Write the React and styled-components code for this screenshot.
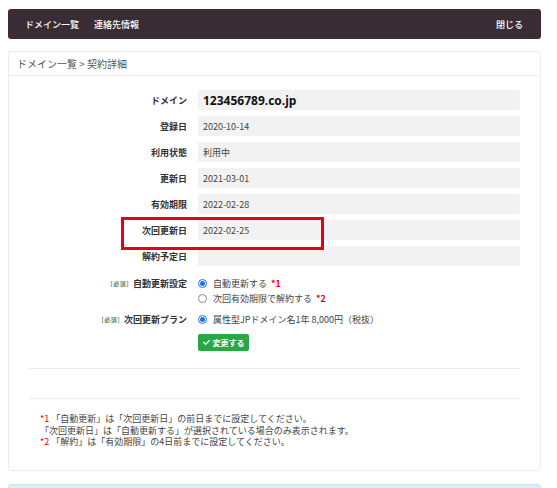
import React from 'react'
import styled, { createGlobalStyle } from 'styled-components'
import { FaCheck } from 'react-icons/fa'

const GlobalStyle = createGlobalStyle`
  html, body { margin: 0; padding: 0; background: #fff; }
  body {
    font-family: "Noto Sans CJK JP", "Noto Sans", sans-serif;
    color: #333;
  }
`

const Page = styled.div`
  padding: 9px 16px 0 8px;
`

const NavBar = styled.nav`
  height: 30px;
  background: #3a2c35;
  border-radius: 3px;
  display: flex;
  align-items: center;
  padding: 0 18px 0 17px;
  margin-bottom: 12px;
`

const NavLink = styled.a`
  color: #fff;
  font-size: 9px;
  font-weight: 500;
  text-decoration: none;
  margin-right: ${({ $last }) => ($last ? '0' : '15px')};
  margin-left: ${({ $right }) => ($right ? 'auto' : '0')};
`

const Card = styled.section`
  border: 1px solid #ececec;
  border-radius: 3px;
`

const CardHeader = styled.div`
  height: 23px;
  display: flex;
  align-items: center;
  padding: 0 8px;
  font-size: 10px;
  color: #555;
  border-bottom: 1px solid #ececec;
`

const CardBody = styled.div`
  padding: 14px 20px 22px 20px;
`

const Form = styled.div`
  display: grid;
  grid-template-columns: 158px 1fr;
  column-gap: 11px;
  row-gap: 6px;
  align-items: center;
`

const Label = styled.div`
  position: relative;
  text-align: right;
  font-size: 9px;
  font-weight: 700;
  color: #333;
  align-self: ${({ $top }) => ($top ? 'start' : 'center')};
  margin-top: ${({ $space }) => $space || '0'};
  line-height: 15px;
`

const Required = styled.span`
  font-size: 6px;
  font-weight: 700;
  letter-spacing: 0.5px;
  color: #5d8a5d;
  margin-right: 4px;
  vertical-align: 1px;
`

const Value = styled.div`
  height: 20px;
  background: #f2f2f2;
  border-radius: 2px;
  display: flex;
  align-items: center;
  padding: 0 5px;
  font-size: ${({ $big }) => ($big ? '12px' : '9px')};
  font-weight: ${({ $big }) => ($big ? 700 : 400)};
  color: ${({ $big }) => ($big ? '#111' : '#444')};
  font-family: ${({ $big }) => ($big ? '"Open Sans", "Noto Sans CJK JP", sans-serif' : 'inherit')};
`

const Highlight = styled.div`
  position: absolute;
  left: 92px;
  top: -6px;
  width: 197px;
  height: 27px;
  border: 3px solid #e60012;
  pointer-events: none;
`

const Choices = styled.div`
  display: flex;
  flex-direction: column;
  margin-top: ${({ $space }) => $space || '0'};
`

const Choice = styled.label`
  display: flex;
  align-items: center;
  height: 15px;
  font-size: 9px;
  color: #444;
`

const Radio = styled.span`
  width: 7px;
  height: 7px;
  border-radius: 50%;
  border: 1px solid ${({ $on }) => ($on ? '#1a73e8' : '#8a8a8a')};
  background: #fff;
  margin-right: 6px;
  display: inline-flex;
  align-items: center;
  justify-content: center;
  &::after {
    content: '';
    width: 5px;
    height: 5px;
    border-radius: 50%;
    background: ${({ $on }) => ($on ? '#1a73e8' : 'transparent')};
  }
`

const Mark = styled.span`
  color: #e60012;
  font-weight: 700;
  margin-left: 4px;
`

const Button = styled.button`
  margin-top: 3px;
  width: 51px;
  height: 17px;
  border: none;
  border-radius: 2px;
  background: #28a745;
  color: #fff;
  font-family: inherit;
  font-size: 8px;
  font-weight: 700;
  display: inline-flex;
  align-items: center;
  justify-content: center;
  gap: 3px;
  padding: 0;
  svg { width: 7px; height: 7px; }
`

const Rule = styled.hr`
  border: none;
  border-top: 1px solid #ececec;
  margin: ${({ $m }) => $m};
`

const Notes = styled.div`
  margin-top: 14px;
  padding-left: 11px;
  font-size: 9px;
  line-height: 11.5px;
  color: #444;
`

const Red = styled.span`
  color: #e60012;
`

const Alert = styled.div`
  margin-top: 13px;
  height: 20px;
  background: #d9eef6;
  border: 1px solid #c4e5ef;
  border-radius: 3px;
`

const rows = [
  ['ドメイン', '123456789.co.jp', true],
  ['登録日', '2020-10-14'],
  ['利用状態', '利用中'],
  ['更新日', '2021-03-01'],
  ['有効期限', '2022-02-28'],
  ['次回更新日', '2022-02-25', false, true],
  ['解約予定日', ''],
]

export default function App() {
  return (
    <Page>
      <GlobalStyle />
      <NavBar>
        <NavLink href="#">ドメイン一覧</NavLink>
        <NavLink href="#" $last>連絡先情報</NavLink>
        <NavLink href="#" $right $last>閉じる</NavLink>
      </NavBar>

      <Card>
        <CardHeader>ドメイン一覧 &gt; 契約詳細</CardHeader>
        <CardBody>
          <Form>
            {rows.map(([label, value, big, mark]) => (
              <React.Fragment key={label}>
                <Label>
                  {label}
                  {mark && <Highlight />}
                </Label>
                <Value $big={big}>{value}</Value>
              </React.Fragment>
            ))}

            <Label $top $space="4px">
              <Required>[必須]</Required>自動更新設定
            </Label>
            <Choices $space="4px">
              <Choice><Radio $on />自動更新する<Mark>*1</Mark></Choice>
              <Choice><Radio />次回有効期限で解約する<Mark>*2</Mark></Choice>
            </Choices>

            <Label $top>
              <Required>[必須]</Required>次回更新プラン
            </Label>
            <Choices>
              <Choice><Radio $on />属性型JPドメイン名1年 8,000円（税抜）</Choice>
              <div>
                <Button><FaCheck />変更する</Button>
              </div>
            </Choices>
          </Form>

          <Rule $m="17px 0 0 0" />
          <Rule $m="29px 0 0 0" />

          <Notes>
            <div><Red>*1</Red> 「自動更新」は「次回更新日」の前日までに設定してください。</div>
            <div>「次回更新日」は「自動更新する」が選択されている場合のみ表示されます。</div>
            <div><Red>*2</Red> 「解約」は「有効期限」の4日前までに設定してください。</div>
          </Notes>
        </CardBody>
      </Card>

      <Alert />
    </Page>
  )
}
